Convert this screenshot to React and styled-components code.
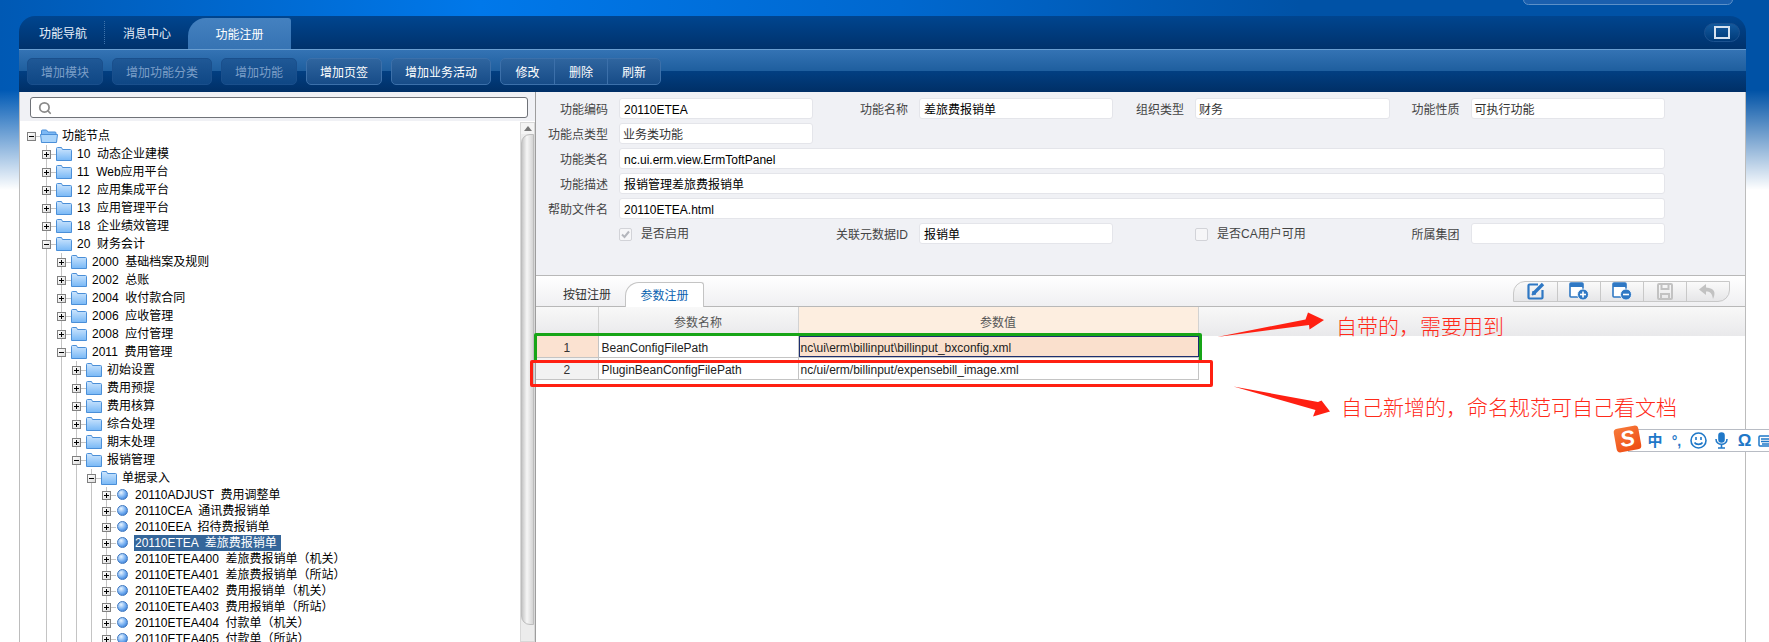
import React from 'react';
import styled, { createGlobalStyle } from 'styled-components';
import { Search } from 'lucide-react';

const FONT = '"Liberation Sans", "Noto Sans CJK SC", sans-serif';

const GlobalStyle = createGlobalStyle`
  html, body {
    margin: 0;
    padding: 0;
    background: #fff;
  }
  * {
    box-sizing: border-box;
  }
`;

const Page = styled.div`
  position: relative;
  width: 1769px;
  height: 642px;
  overflow: hidden;
  padding: 16px 23px 0 19px;
  font: 12px/16px ${FONT};
  background:
    linear-gradient(180deg, rgba(255, 255, 255, 0) 90px, #fff 190px),
    linear-gradient(90deg, #0059b4 0, #0078ea 480px, #0068cf 900px, #0052a6 1300px, #0052a6 100%);
`;

const TopBump = styled.div`
  position: absolute;
  top: -6px;
  left: 1523px;
  width: 210px;
  height: 11px;
  border: 1px solid #5c90c8;
  border-radius: 8px;
  background: #1a5fae;
`;

const Window = styled.div`
  display: flex;
  flex-direction: column;
  height: 626px;
`;

const TabBar = styled.div`
  display: flex;
  align-items: center;
  height: 33px;
  border-radius: 16px 16px 0 0;
  background: linear-gradient(180deg, #00458f, #00326c);
`;

const NavTab = styled.div`
  flex: none;
  padding: 3px ${(p) => p.$right}px 0 ${(p) => p.$left}px;
  color: #e8f0fa;
`;

const NavSeparator = styled.div`
  flex: none;
  width: 1px;
  height: 23px;
  border-left: 1px dotted #3f74ac;
`;

const ActiveTab = styled.div`
  flex: none;
  align-self: flex-end;
  width: 103px;
  height: 31px;
  line-height: 34px;
  text-align: center;
  color: #fff;
  border-radius: 18px 3px 0 0;
  background: linear-gradient(180deg, #4481c0, #3673b3);
`;

const MaxButton = styled.div`
  display: flex;
  align-items: center;
  justify-content: center;
  flex: none;
  width: 36px;
  height: 19px;
  margin-left: auto;
  margin-right: 6px;
  border: 1px solid #1c5290;
  border-radius: 10px;
  background: linear-gradient(180deg, #135a9f, #003a78);

  &::after {
    content: '';
    width: 12px;
    height: 9px;
    border: 2px solid #d6e2f0;
  }
`;

const Toolbar = styled.div`
  display: flex;
  align-items: center;
  gap: 9px;
  height: 43px;
  padding-left: 8px;
  border-top: 1px solid #6a9fd2;
  background: linear-gradient(180deg, #3473b4 0, #1f5f9f 49%, #023f82 50%, #002f66 100%);
`;

const ToolButton = styled.div`
  flex: none;
  height: 27px;
  line-height: 28px;
  padding: 0 13px;
  color: ${(p) => (p.$disabled ? '#7c9fc8' : '#fff')};
  border: 1px solid ${(p) => (p.$disabled ? '#1a4f8c' : '#3c70aa')};
  border-radius: 5px;
  background: ${(p) =>
    p.$disabled
      ? 'linear-gradient(180deg, #1f5896, #0f4785)'
      : 'linear-gradient(180deg, #2f659f, #174c88)'};
`;

const ButtonGroup = styled.div`
  display: flex;
  flex: none;
  height: 27px;
  border: 1px solid #3c70aa;
  border-radius: 5px;
  background: linear-gradient(180deg, #2f659f, #174c88);
`;

const GroupButton = styled.div`
  width: 53px;
  line-height: 28px;
  text-align: center;
  color: #fff;
  border-left: 1px solid #3c70aa;

  &:first-child {
    border-left: 0;
  }
`;

const Body = styled.div`
  display: flex;
  flex: 1;
  min-height: 0;
  border: solid #bcbcbc;
  border-width: 0 1px;
  background: #fff;
`;

const LeftPanel = styled.div`
  display: flex;
  flex-direction: column;
  flex: none;
  width: 515px;
  background: #f0f1f5;
`;

const SearchRow = styled.div`
  flex: none;
  height: 29px;
  padding: 5px 7px 0 10px;
`;

const SearchBox = styled.div`
  display: flex;
  align-items: center;
  height: 21px;
  padding-left: 7px;
  color: #8a8a8a;
  border: 1px solid #6f7278;
  border-radius: 3px;
  background: #fff;
`;

const TreeArea = styled.div`
  display: flex;
  flex: 1;
  min-height: 0;
  background: #fff;
`;

const Tree = styled.div`
  flex: 1;
  min-width: 0;
  overflow: hidden;
  padding: 6px 0 0 7px;
`;

const TreeRow = styled.div`
  display: flex;
  align-items: center;
  height: ${(p) => (p.$leaf ? 16 : 18)}px;
  color: #000;
  white-space: pre;
`;

const Guide = styled.span`
  flex: none;
  align-self: stretch;
  width: 15px;
  background: linear-gradient(#c4c4c4, #c4c4c4) 4px 0 / 1px 100% no-repeat;
`;

const RootGap = styled.span`
  flex: none;
  width: 15px;
`;

const ExpanderCell = styled.span`
  display: flex;
  align-items: center;
  flex: none;
  align-self: stretch;
  width: ${(p) => (p.$leaf ? 15 : p.$root ? 13 : 14)}px;
  background:
    linear-gradient(#c4c4c4, #c4c4c4) 9px 50% / 5px 1px no-repeat,
    ${(p) => (p.$root ? 'none' : 'linear-gradient(#c4c4c4, #c4c4c4) 4px 0 / 1px 100% no-repeat')};
`;

const Expander = styled.span`
  position: relative;
  width: 9px;
  height: 9px;
  border: 1px solid #808080;
  background: linear-gradient(135deg, #fff, #dcdcdc);

  &::before {
    content: '';
    position: absolute;
    left: 1px;
    top: 3px;
    width: 5px;
    height: 1px;
    background: #000;
  }

  &::after {
    content: '';
    display: ${(p) => (p.$open ? 'none' : 'block')};
    position: absolute;
    left: 3px;
    top: 1px;
    width: 1px;
    height: 5px;
    background: #000;
  }
`;

const FolderSvg = styled.svg`
  flex: none;
  margin-right: ${(p) => (p.$root ? 4 : 5)}px;
`;

const Ball = styled.span`
  flex: none;
  width: 11px;
  height: 11px;
  margin: -2px 7px 0 0;
  border: 1px solid #3f78c0;
  border-radius: 50%;
  background: radial-gradient(circle at 35% 30%, #e8f4ff, #6eaaf0 55%, #2a6cc4);
`;

const NodeLabel = styled.span`
  padding: 1px ${(p) => (p.$selected ? 4 : 0)}px 0 ${(p) => (p.$selected ? 1 : 0)}px;
  margin-left: ${(p) => (p.$selected ? -1 : 0)}px;
  line-height: 15px;
  color: ${(p) => (p.$selected ? '#fff' : '#000')};
  background: ${(p) => (p.$selected ? '#35669a' : 'transparent')};
`;

const Scrollbar = styled.div`
  display: flex;
  flex-direction: column;
  flex: none;
  width: 15px;
  margin-top: 1px;
  border: 1px solid #d8d8d8;
  background: #ececec;
`;

const ScrollUp = styled.div`
  flex: none;
  height: 11px;
  background: #f4f4f4;

  &::after {
    content: '';
    display: block;
    width: 0;
    margin: 3px auto 0;
    border: 4px solid transparent;
    border-top: 0;
    border-bottom: 5px solid #777;
  }
`;

const ScrollThumb = styled.div`
  flex: none;
  height: 491px;
  border: 1px solid #bdbdbd;
  border-radius: 9px 0 0 9px;
  background: linear-gradient(90deg, #c6c6c6, #f6f6f6 45%, #d4d4d4);
`;

const Splitter = styled.div`
  flex: none;
  width: 1px;
  background: #9d9d9d;
`;

const RightPanel = styled.div`
  display: flex;
  flex-direction: column;
  flex: 1;
  min-width: 0;
`;

const FormGrid = styled.div`
  display: grid;
  grid-template-columns: 83px 194px 106px 194px 82px 194.5px 81px 194.5px;
  grid-auto-rows: 21px;
  row-gap: 4px;
  flex: none;
  height: 184px;
  padding-top: 6px;
  border-bottom: 1px solid #b8b8b8;
  background: #f0f1f5;
`;

const FieldLabel = styled.div`
  grid-column: ${(p) => p.$col || 'auto'};
  line-height: 24px;
  padding-right: 11px;
  text-align: right;
  color: #444;
  white-space: nowrap;
`;

const FieldInput = styled.div`
  grid-column: ${(p) => (p.$wide ? '2 / -1' : 'auto')};
  line-height: 22px;
  padding-left: ${(p) => (p.$muted ? 3 : 4)}px;
  color: ${(p) => (p.$muted ? '#333' : '#000')};
  border: 1px solid #e4e5ea;
  border-radius: 3px;
  background: #fff;
`;

const CheckField = styled.label`
  display: flex;
  align-items: center;
  grid-column: ${(p) => p.$col};
  padding-top: 1px;
  color: #444;
`;

const CheckBox = styled.span`
  flex: none;
  display: flex;
  align-items: center;
  justify-content: center;
  width: 13px;
  height: 13px;
  margin-right: 9px;
  border: 1px solid #d2d3d8;
  border-radius: 2px;
  background: #f6f6f8;
`;

const TabStrip = styled.div`
  display: flex;
  align-items: flex-end;
  flex: none;
  height: 31px;
  padding-left: 27px;
  border-bottom: 1px solid #b8b8b8;
  background: linear-gradient(180deg, #fff, #f0f0f2);
`;

const PlainTab = styled.div`
  flex: none;
  width: 62px;
  height: 24px;
  line-height: 26px;
  color: #333;
`;

const CurrentTab = styled.div`
  flex: none;
  width: 79px;
  height: 25px;
  margin-bottom: -1px;
  line-height: 27px;
  text-align: center;
  color: #0a62b0;
  border: 1px solid #c4c4c4;
  border-bottom: 0;
  border-radius: 14px 3px 0 0;
  background: #fff;
`;

const IconGroup = styled.div`
  display: flex;
  align-self: center;
  flex: none;
  height: 21px;
  margin-left: auto;
  margin-right: 15px;
  border: 1px solid #c8c8c8;
  border-radius: 12px 0 12px 0;
  background: linear-gradient(180deg, #fafafa, #e6e6e8);
`;

const IconCell = styled.div`
  display: flex;
  align-items: center;
  justify-content: center;
  width: 43px;
  border-left: 1px solid #c8c8c8;

  &:first-child {
    border-left: 0;
  }
`;

const TableHeader = styled.div`
  display: flex;
  flex: none;
  height: 29px;
  background: linear-gradient(180deg, #f8f8f8, #e9e9eb);
`;

const HeaderCell = styled.div`
  flex: none;
  width: ${(p) => p.$width}px;
  line-height: 32px;
  text-align: center;
  color: #555;
  border-right: 1px solid #d2d2d2;
  background: ${(p) => (p.$active ? '#fdeee0' : 'transparent')};
`;

const Row = styled.div`
  display: flex;
  flex: none;
  width: 662.5px;
  height: 22px;
  border-bottom: 1px solid #c4c4c4;
`;

const IndexCell = styled.div`
  flex: none;
  width: 62.5px;
  line-height: 24px;
  text-align: center;
  color: #333;
  border-right: 1px solid #c4c4c4;
  background: ${(p) => (p.$current ? '#fbe2d1' : '#f2f2f2')};
`;

const NameCell = styled.div`
  flex: none;
  width: 200px;
  line-height: 24px;
  padding-left: 3px;
  color: #222;
  border-right: 1px solid #c4c4c4;
`;

const ValueCell = styled.div`
  flex: none;
  width: 400px;
  line-height: 24px;
  padding-left: 2px;
  color: #222;
  border-right: 1px solid #c4c4c4;
`;

const SelectedCell = styled.div`
  flex: none;
  width: 400px;
  height: 21px;
  line-height: 22px;
  padding-left: 1px;
  color: #222;
  border: 1px solid #1c2f70;
  background: #fae0cd;
`;

const GreenBox = styled.div`
  position: absolute;
  left: 534px;
  top: 333px;
  width: 668px;
  height: 30px;
  border: 3px solid #17a517;
  border-radius: 2px;
`;

const RedBox = styled.div`
  position: absolute;
  left: 530px;
  top: 360px;
  width: 683px;
  height: 27px;
  border: 3px solid #ff2012;
  border-radius: 2px;
`;

const Arrows = styled.svg`
  position: absolute;
  left: 0;
  top: 0;
  pointer-events: none;
`;

const Note = styled.div`
  position: absolute;
  left: ${(p) => p.$left}px;
  top: ${(p) => p.$top}px;
  font-size: 21px;
  line-height: 26px;
  font-family: "Noto Sans CJK SC", sans-serif;
  font-weight: 300;
  color: #ff2a1a;
  white-space: nowrap;
`;

const ImeBar = styled.div`
  position: absolute;
  left: 1628px;
  top: 429px;
  display: flex;
  align-items: center;
  width: 141px;
  height: 23px;
  padding-left: 18px;
  color: #1f78c8;
  border: 1px solid #b8bcc4;
  border-right: 0;
  background: #fff;
`;

const ImeLogo = styled.div`
  position: absolute;
  left: 1615px;
  top: 427px;
  width: 25px;
  height: 24px;
  text-align: center;
  font: italic 700 22px/24px ${FONT};
  color: #fff;
  border-radius: 4px;
  background: linear-gradient(160deg, #f77a3a, #ee4a12);
  transform: rotate(-10deg);
`;

const ImeGlyph = styled.span`
  flex: none;
  width: ${(p) => p.$width}px;
  text-align: center;
  font-size: ${(p) => p.$size || 15}px;
  font-weight: 700;
  line-height: 20px;
`;

const ImeIcon = styled.svg`
  flex: none;
  margin-left: ${(p) => p.$before || 0}px;
  margin-right: ${(p) => p.$gap || 0}px;
`;

const treeNodes = [
  { level: 0, label: '功能节点', open: true, root: true },
  { level: 1, label: '10  动态企业建模' },
  { level: 1, label: '11  Web应用平台' },
  { level: 1, label: '12  应用集成平台' },
  { level: 1, label: '13  应用管理平台' },
  { level: 1, label: '18  企业绩效管理' },
  { level: 1, label: '20  财务会计', open: true },
  { level: 2, label: '2000  基础档案及规则' },
  { level: 2, label: '2002  总账' },
  { level: 2, label: '2004  收付款合同' },
  { level: 2, label: '2006  应收管理' },
  { level: 2, label: '2008  应付管理' },
  { level: 2, label: '2011  费用管理', open: true },
  { level: 3, label: '初始设置' },
  { level: 3, label: '费用预提' },
  { level: 3, label: '费用核算' },
  { level: 3, label: '综合处理' },
  { level: 3, label: '期末处理' },
  { level: 3, label: '报销管理', open: true },
  { level: 4, label: '单据录入', open: true },
  { level: 5, leaf: true, label: '20110ADJUST  费用调整单' },
  { level: 5, leaf: true, label: '20110CEA  通讯费报销单' },
  { level: 5, leaf: true, label: '20110EEA  招待费报销单' },
  { level: 5, leaf: true, label: '20110ETEA  差旅费报销单', selected: true },
  { level: 5, leaf: true, label: '20110ETEA400  差旅费报销单（机关）' },
  { level: 5, leaf: true, label: '20110ETEA401  差旅费报销单（所站）' },
  { level: 5, leaf: true, label: '20110ETEA402  费用报销单（机关）' },
  { level: 5, leaf: true, label: '20110ETEA403  费用报销单（所站）' },
  { level: 5, leaf: true, label: '20110ETEA404  付款单（机关）' },
  { level: 5, leaf: true, label: '20110ETEA405  付款单（所站）' },
];

function FolderIcon({ root }) {
  if (root) {
    return (
      <FolderSvg $root width="18" height="14" viewBox="0 0 18 14">
        <path d="M1.5 13V2a1 1 0 0 1 1-1h4l1.5 2h7a1 1 0 0 1 1 1v9z" fill="#7db9f5" stroke="#4a8fd8" />
        <path d="M.5 5.5h17l-1 8h-15z" fill="#a9d4fb" stroke="#4a8fd8" />
      </FolderSvg>
    );
  }
  return (
    <FolderSvg width="16" height="14" viewBox="0 0 16 14">
      <defs>
        <linearGradient id="folderFill" x1="0" y1="0" x2="0" y2="1">
          <stop offset="0" stopColor="#cfe6fd" />
          <stop offset="1" stopColor="#78b8f6" />
        </linearGradient>
      </defs>
      <path d="M.5 13.5V1.5a1 1 0 0 1 1-1h4l1 2h8a1 1 0 0 1 1 1v10z" fill="url(#folderFill)" stroke="#4a8fd8" />
    </FolderSvg>
  );
}

function TreeNode({ node }) {
  const guides = Array.from({ length: Math.max(node.level - 1, 0) });
  return (
    <TreeRow $leaf={node.leaf}>
      {node.level > 0 && <RootGap />}
      {guides.map((_, i) => (
        <Guide key={i} />
      ))}
      <ExpanderCell $root={node.root} $leaf={node.leaf}>
        <Expander $open={node.open} />
      </ExpanderCell>
      {node.leaf ? <Ball /> : <FolderIcon root={node.root} />}
      <NodeLabel $selected={node.selected}>{node.label}</NodeLabel>
    </TreeRow>
  );
}

function EditIcon() {
  return (
    <svg width="18" height="18" viewBox="0 0 18 18" fill="none" stroke="#2f78c4">
      <path d="M11 2.500H2.500a1 1 0 0 0-1 1v12a1 1 0 0 0 1 1h12a1 1 0 0 0 1-1V8" strokeWidth="2.200" />
      <path d="M7.500 10.500L16 2" strokeWidth="3.400" />
      <path d="M5 13l1-4 3 3z" fill="#2f78c4" strokeWidth="1" />
    </svg>
  );
}

function RowIcon({ minus }) {
  return (
    <svg width="20" height="18" viewBox="0 0 20 18" fill="none">
      <rect x="1" y="1" width="13" height="14" rx="1" stroke="#2f78c4" strokeWidth="1.6" fill="#fff" />
      <rect x="1" y="1" width="13" height="4" fill="#2f78c4" />
      <circle cx="14" cy="12.5" r="5.500" fill="#2f78c4" stroke="#fff" strokeWidth=".8" />
      <path d="M11 12.500h6" stroke="#fff" strokeWidth="1.6" />
      {!minus && <path d="M14 9.500v6" stroke="#fff" strokeWidth="1.6" />}
    </svg>
  );
}

function SaveIcon() {
  return (
    <svg width="16" height="17" viewBox="0 0 16 17" fill="none" stroke="#c2c2c2" strokeWidth="2">
      <rect x="1" y="1" width="14" height="15" rx="1" />
      <path d="M4.500 1v5h7V1M4 16v-5h8v5" />
    </svg>
  );
}

function UndoIcon() {
  return (
    <svg width="18" height="15" viewBox="0 0 18 15">
      <path d="M7 0L0 5.500 7 11V7.500c4 0 6 1.500 7 7.500 3-6 2-11-7-11.500z" fill="#c2c2c2" />
    </svg>
  );
}

export default function App() {
  return (
    <Page>
      <GlobalStyle />
      <TopBump />
      <Window>
        <TabBar>
          <NavTab $left={20} $right={17}>功能导航</NavTab>
          <NavSeparator />
          <NavTab $left={18} $right={17}>消息中心</NavTab>
          <ActiveTab>功能注册</ActiveTab>
          <MaxButton />
        </TabBar>
        <Toolbar>
          <ToolButton $disabled>增加模块</ToolButton>
          <ToolButton $disabled>增加功能分类</ToolButton>
          <ToolButton $disabled>增加功能</ToolButton>
          <ToolButton>增加页签</ToolButton>
          <ToolButton>增加业务活动</ToolButton>
          <ButtonGroup>
            <GroupButton>修改</GroupButton>
            <GroupButton>删除</GroupButton>
            <GroupButton>刷新</GroupButton>
          </ButtonGroup>
        </Toolbar>
        <Body>
          <LeftPanel>
            <SearchRow>
              <SearchBox>
                <Search size={14} strokeWidth={3} />
              </SearchBox>
            </SearchRow>
            <TreeArea>
              <Tree>
                {treeNodes.map((node) => (
                  <TreeNode key={node.label} node={node} />
                ))}
              </Tree>
              <Scrollbar>
                <ScrollUp />
                <ScrollThumb />
              </Scrollbar>
            </TreeArea>
          </LeftPanel>
          <Splitter />
          <RightPanel>
            <FormGrid>
              <FieldLabel>功能编码</FieldLabel>
              <FieldInput>20110ETEA</FieldInput>
              <FieldLabel>功能名称</FieldLabel>
              <FieldInput>差旅费报销单</FieldInput>
              <FieldLabel>组织类型</FieldLabel>
              <FieldInput $muted>财务</FieldInput>
              <FieldLabel>功能性质</FieldLabel>
              <FieldInput $muted>可执行功能</FieldInput>

              <FieldLabel $col="1">功能点类型</FieldLabel>
              <FieldInput $muted>业务类功能</FieldInput>

              <FieldLabel $col="1">功能类名</FieldLabel>
              <FieldInput $wide>nc.ui.erm.view.ErmToftPanel</FieldInput>

              <FieldLabel $col="1">功能描述</FieldLabel>
              <FieldInput $wide>报销管理差旅费报销单</FieldInput>

              <FieldLabel $col="1">帮助文件名</FieldLabel>
              <FieldInput $wide>20110ETEA.html</FieldInput>

              <CheckField $col="2">
                <CheckBox>
                  <svg width="9" height="9" viewBox="0 0 9 9" fill="none" stroke="#b4b6bc" strokeWidth="2">
                    <path d="M1 4.500l2.500 2.500L8 1.500" />
                  </svg>
                </CheckBox>
                是否启用
              </CheckField>
              <FieldLabel>关联元数据ID</FieldLabel>
              <FieldInput>报销单</FieldInput>
              <CheckField $col="6">
                <CheckBox />
                是否CA用户可用
              </CheckField>
              <FieldLabel>所属集团</FieldLabel>
              <FieldInput />
            </FormGrid>
            <TabStrip>
              <PlainTab>按钮注册</PlainTab>
              <CurrentTab>参数注册</CurrentTab>
              <IconGroup>
                <IconCell><EditIcon /></IconCell>
                <IconCell><RowIcon /></IconCell>
                <IconCell><RowIcon minus /></IconCell>
                <IconCell><SaveIcon /></IconCell>
                <IconCell><UndoIcon /></IconCell>
              </IconGroup>
            </TabStrip>
            <TableHeader>
              <HeaderCell $width={62.5} />
              <HeaderCell $width={200}>参数名称</HeaderCell>
              <HeaderCell $width={400} $active>参数值</HeaderCell>
            </TableHeader>
            <Row>
              <IndexCell $current>1</IndexCell>
              <NameCell>BeanConfigFilePath</NameCell>
              <SelectedCell>nc\ui\erm\billinput\billinput_bxconfig.xml</SelectedCell>
            </Row>
            <Row>
              <IndexCell>2</IndexCell>
              <NameCell>PluginBeanConfigFilePath</NameCell>
              <ValueCell>nc/ui/erm/billinput/expensebill_image.xml</ValueCell>
            </Row>
          </RightPanel>
        </Body>
      </Window>

      <GreenBox />
      <RedBox />
      <Arrows width="1769" height="642" viewBox="0 0 1769 642">
        <path d="M1217 337L1305.500 319.500 1308 312.500 1324 320 1309.500 329.500 1309 325z" fill="#ff2012" />
        <path d="M1233.500 386.500L1318 402 1321.500 400.500 1330 411.500 1313 416.500 1315.500 410z" fill="#ff2012" />
      </Arrows>
      <Note $left={1336} $top={312}>自带的，需要用到</Note>
      <Note $left={1341} $top={393}>自己新增的，命名规范可自己看文档</Note>

      <ImeBar>
        <ImeGlyph $width={16}>中</ImeGlyph>
        <ImeGlyph $width={27} $size={14}>°,</ImeGlyph>
        <ImeIcon $gap={8} width="17" height="17" viewBox="0 0 17 17" fill="none" stroke="#1f78c8" strokeWidth="1.600">
          <circle cx="8.500" cy="8.500" r="7.500" />
          <path d="M6 5v3M11 5v3M4.500 10.500c1.500 2.500 6.500 2.500 8 0" />
        </ImeIcon>
        <ImeIcon $gap={9} width="13" height="17" viewBox="0 0 13 17" fill="none" stroke="#1f78c8" strokeWidth="1.600">
          <rect x="4" y="1" width="5" height="9" rx="2.500" fill="#1f78c8" />
          <path d="M1 7c0 7 11 7 11 0M6.500 12v4M3 16h7" />
        </ImeIcon>
        <ImeGlyph $width={15} $size={17}>Ω</ImeGlyph>
        <ImeIcon $before={6} width="16" height="12" viewBox="0 0 16 12" fill="none" stroke="#1f78c8" strokeWidth="1.500">
          <rect x="1" y="1" width="15" height="10" rx="1" />
          <path d="M3 4h10M3 6.500h10M4 9h8" />
        </ImeIcon>
      </ImeBar>
      <ImeLogo>S</ImeLogo>
    </Page>
  );
}
